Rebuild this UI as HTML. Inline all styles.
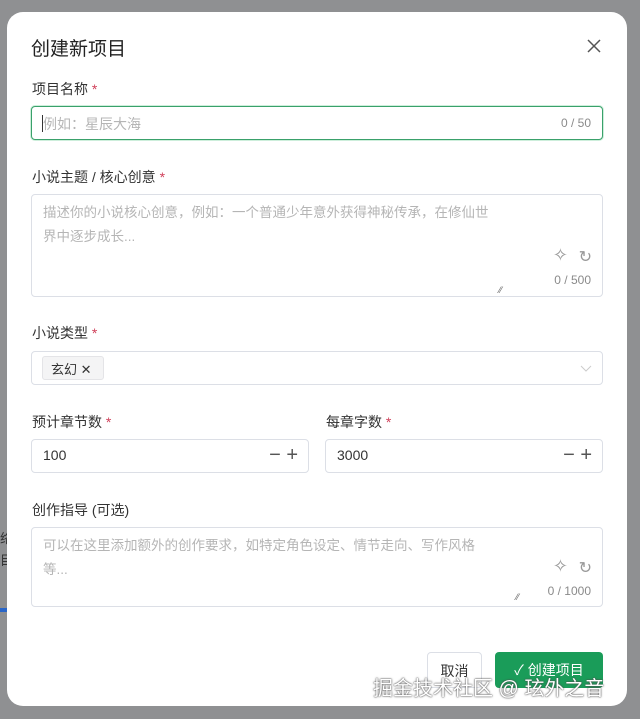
<!DOCTYPE html>
<html><head><meta charset="utf-8"><style>
*{box-sizing:border-box;margin:0;padding:0}
body{width:640px;height:719px;background:#8f9092;font-family:"Liberation Sans","Noto Sans CJK SC",sans-serif;position:relative;overflow:hidden;color:#333}
.m{position:absolute;left:7px;top:12px;width:620px;height:694px;background:#fff;border-radius:16px}
.a{position:absolute}
.lbl{font-size:14px;color:#333}
.lbl b{color:#d0405a;font-weight:normal}
.box{position:absolute;border:1px solid #dcdfe6;border-radius:4px;background:#fff}
.ph{color:#b5b5b5;font-size:14px}
.cnt{font-size:12px;color:#8a8a8a;position:absolute}
</style></head><body>
<div class="a" style="left:0;top:528px;font-size:13px;color:#333">络</div>
<div class="a" style="left:0;top:550px;font-size:13px;color:#333">目</div>
<div class="a" style="left:0;top:608px;width:8px;height:4px;background:#2a66c8"></div>
<div class="m">
<div class="a" style="left:24px;top:22px;font-size:19px;color:#222">创建新项目</div>
<svg class="a" style="left:580px;top:27px" width="14" height="14"><path d="M1 1L13 13M13 1L1 13" stroke="#555" stroke-width="1.5"/></svg>
<div class="a lbl" style="left:25px;top:67px">项目名称 <b>*</b></div>
<div class="box" style="left:24px;top:94px;width:572px;height:34px;border-color:#3aa16b;box-shadow:0 0 0 1px #cdeedb">
<div class="a" style="left:10px;top:8px;width:1px;height:17px;background:#333"></div>
<div class="a ph" style="left:11px;top:7px">例如：星辰大海</div><div class="cnt" style="right:11px;top:9px">0 / 50</div></div>
<div class="a lbl" style="left:25px;top:155px">小说主题 / 核心创意 <b>*</b></div>
<div class="box" style="left:24px;top:182px;width:572px;height:103px">
<div class="a ph" style="left:11px;top:6px;width:455px;line-height:24px;font-size:13.5px">描述你的小说核心创意，例如：一个普通少年意外获得神秘传承，在修仙世界中逐步成长...</div>
<div class="a" style="right:34px;top:50px;font-size:18px;color:#999">✧</div><div class="a" style="right:10px;top:52px;font-size:16px;color:#999">↻</div>
<div class="cnt" style="right:11px;top:78px">0 / 500</div>
<div class="a" style="left:467px;top:90px;font-size:9px;color:#666">⁄⁄</div></div>
<div class="a lbl" style="left:25px;top:311px">小说类型 <b>*</b></div>
<div class="box" style="left:24px;top:339px;width:572px;height:34px">
<div class="a" style="left:10px;top:4px;width:62px;height:24px;background:#f4f4f5;border:1px solid #e4e4e7;border-radius:3px;font-size:13px;color:#333;padding:2px 8px">玄幻 ✕</div>
<svg class="a" style="right:10px;top:13px" width="12" height="8"><path d="M1 1L6 6L11 1" stroke="#ccc" fill="none"/></svg></div>
<div class="a lbl" style="left:25px;top:400px">预计章节数 <b>*</b></div>
<div class="a lbl" style="left:319px;top:400px">每章字数 <b>*</b></div>
<div class="box" style="left:24px;top:427px;width:278px;height:34px"><div class="a" style="left:11px;top:7px;font-size:14px">100</div><div class="a" style="right:10px;top:4px;font-size:20px;color:#555">− +</div></div>
<div class="box" style="left:318px;top:427px;width:278px;height:34px"><div class="a" style="left:11px;top:7px;font-size:14px">3000</div><div class="a" style="right:10px;top:4px;font-size:20px;color:#555">− +</div></div>
<div class="a lbl" style="left:25px;top:488px">创作指导 (可选)</div>
<div class="box" style="left:24px;top:515px;width:572px;height:80px">
<div class="a ph" style="left:11px;top:6px;width:455px;line-height:24px;font-size:13.5px">可以在这里添加额外的创作要求，如特定角色设定、情节走向、写作风格等...</div>
<div class="a" style="right:34px;top:28px;font-size:18px;color:#999">✧</div><div class="a" style="right:10px;top:30px;font-size:16px;color:#999">↻</div>
<div class="cnt" style="right:11px;top:56px">0 / 1000</div>
<div class="a" style="left:484px;top:64px;font-size:9px;color:#666">⁄⁄</div></div>
<div class="a" style="left:420px;top:640px;width:55px;height:36px;border:1px solid #dcdfe6;border-radius:4px;font-size:14px;padding-top:8px;text-align:center">取消</div>
<div class="a" style="left:488px;top:640px;width:108px;height:36px;background:#1a9c59;border-radius:4px;color:#fff;font-size:14px;padding-top:8px;text-align:center">✓ 创建项目</div>
<div class="a" style="left:366px;top:660px;font-size:20px;color:#fff;text-shadow:0 0 2px #555,0 0 1px #333">掘金技术社区 @ 玹外之音</div>
</div>
</body></html>
